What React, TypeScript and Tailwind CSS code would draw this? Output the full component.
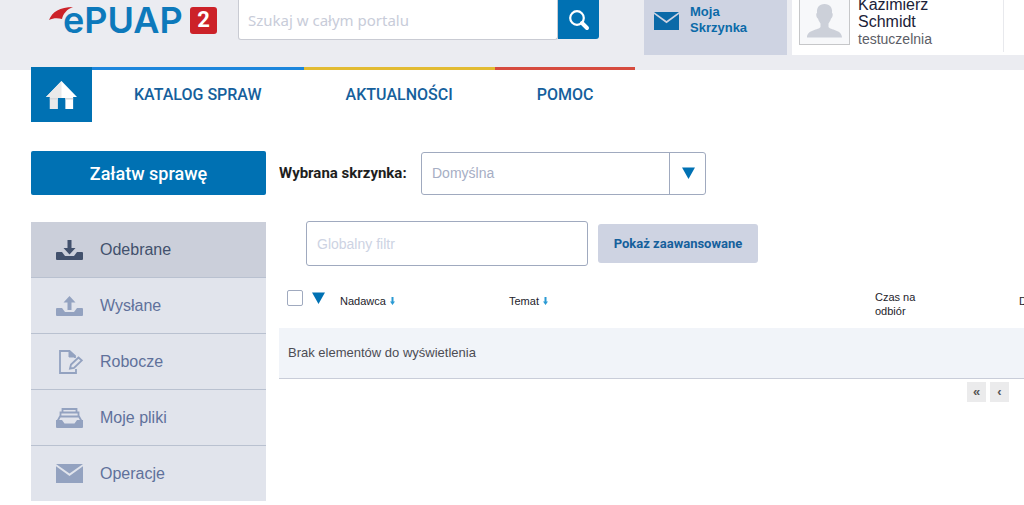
import type { ReactNode } from 'react'

const SANS = "font-['Liberation_Sans',Arial,sans-serif]"
const ROBOTO = "font-['Roboto',sans-serif]"

function Logo() {
  return (
    <a href="#" aria-label="ePUAP 2" className="flex h-10 w-[168px] shrink-0 items-center">
      <svg width="24" height="14" viewBox="0 0 24 14" className="-mr-[10px] mb-3 shrink-0">
        <path d="M0 13C3 5 11 0 24 0 18 2 14 7 13 12 9 11 4 11 0 13Z" fill="#cc2229" />
      </svg>
      <span className="font-['Inter',sans-serif] text-[36px] leading-10 font-semibold text-[#0d79bb]">ePUAP</span>
      <span className="ml-auto flex size-[27px] shrink-0 items-center justify-center rounded-[3px] bg-[#cc2229] font-['Roboto',sans-serif] text-[22px] leading-[26px] font-bold text-white">
        2
      </span>
    </a>
  )
}

function SearchIcon() {
  return (
    <svg width="22" height="22" viewBox="0 0 22 22" fill="none" stroke="#fff">
      <circle cx="9" cy="9" r="6.8" strokeWidth="2.2" />
      <path d="M14 14l5 5" strokeWidth="4" strokeLinecap="round" />
    </svg>
  )
}

function HomeIcon() {
  return (
    <svg width="31" height="28" viewBox="0 0 32 28" preserveAspectRatio="none" className="mr-px">
      <path d="M16 0L32 16H28V28H20V17H12V28H4V16H0Z" fill="#fff" />
      <path d="M16 0V17H12V28H4V16H0Z" fill="#e9e9ea" />
      <path d="M20 17H28V18.500H20ZM4 17H12V18.500H4Z" fill="#d5d8dc" />
    </svg>
  )
}

function Envelope({ width, height }: { width: number; height: number }) {
  return (
    <svg width={width} height={height} viewBox="0 0 27 19" preserveAspectRatio="none" fill="currentColor">
      <path d="M0 0H27L13.500 9.500Z" />
      <path d="M0 2.200L13.500 12 27 2.200V19H0Z" />
    </svg>
  )
}

function Triangle() {
  return (
    <svg width="13" height="12" viewBox="0 0 13 12" fill="#0071b3">
      <path d="M0 0.500H13L6.500 12Z" />
    </svg>
  )
}

const TRAY = 'M1 12H6L9 16H18L21 12H26Q27 12 27 13V19Q27 20 26 20H1Q0 20 0 19V13Q0 12 1 12Z'

function DownloadIcon() {
  return (
    <svg width="27" height="20" viewBox="0 0 27 20" fill="currentColor">
      <path d={TRAY} />
      <path d="M11.500 0H15.500V8H19.500L13.500 14.500 7.500 8H11.500Z" />
    </svg>
  )
}

function UploadIcon() {
  return (
    <svg width="27" height="20" viewBox="0 0 27 20" fill="currentColor">
      <path d={TRAY} />
      <path d="M11.500 14V6.500H7.500L13.500 0 19.500 6.500H15.500V14Z" />
    </svg>
  )
}

function DraftIcon() {
  return (
    <svg width="27" height="26" viewBox="0 0 27 26" fill="none" stroke="currentColor" strokeWidth="1.800">
      <path d="M19 9V7L13.500 2H4V24H20V20" />
      <path d="M13 2V8H19Z" fill="currentColor" strokeWidth="1" />
      <path d="M14 19.500L15 15.500 22.500 8.500 25.800 11.500 18 18.800Z" />
    </svg>
  )
}

function FilesIcon() {
  return (
    <svg width="27" height="20" viewBox="0 0 27 20" fill="none" stroke="currentColor" strokeWidth="1.800">
      <path d="M6.500 4.500V1H20.500V4.500M4.500 8V4.500H22.500V8M1.500 13L4 8.500H23L25.500 13" />
      <path d="M0 12H6L8.500 15.500H18.500L21 12H27V19Q27 20 26 20H1Q0 20 0 19Z" fill="currentColor" stroke="none" />
    </svg>
  )
}

const NAV = [
  { label: 'KATALOG SPRAW', border: 'border-[#1c86dc]' },
  { label: 'AKTUALNOŚCI', border: 'border-[#e2bb32]' },
  { label: 'POMOC', border: 'border-[#d64b3f]' },
]

const FOLDERS: { label: string; icon: ReactNode; active?: boolean }[] = [
  { label: 'Odebrane', icon: <DownloadIcon />, active: true },
  { label: 'Wysłane', icon: <UploadIcon /> },
  { label: 'Robocze', icon: <DraftIcon /> },
  { label: 'Moje pliki', icon: <FilesIcon /> },
  { label: 'Operacje', icon: <Envelope width={27} height={19} /> },
]

function Header() {
  return (
    <header className="flex h-[70px] items-start bg-[#ebecf1] pl-[49px]">
      <Logo />

      <form className="ml-[21px] flex w-[361px] shrink-0" role="search">
        <input
          type="search"
          aria-label="Szukaj"
          placeholder="Szukaj w całym portalu"
          className="h-10 min-w-0 flex-1 rounded-b-[3px] border border-t-0 border-[#c9cbd3] bg-white px-[9px] font-['Noto_Sans',sans-serif] text-[15px] placeholder:text-[#c8ccd9]"
        />
        <button type="button" aria-label="Szukaj" className="flex h-[39px] w-[41px] items-center justify-center rounded-br-[3px] bg-[#0071b3]">
          <SearchIcon />
        </button>
      </form>

      <a href="#" className="ml-[45px] flex h-[55px] w-[143px] shrink-0 items-start bg-[#ced3e2] pl-[10px] text-[#0b6aa8]">
        <span className="pt-3">
          <Envelope width={25} height={18} />
        </span>
        <span className="ml-[11px] pt-1 text-[13px] leading-4 font-bold">
          Moja<br />Skrzynka
        </span>
      </a>

      <div className="ml-[5px] flex h-[55px] min-w-0 flex-1 bg-white pl-[7px]">
        <div className="flex h-[45px] w-[51px] shrink-0 items-end justify-center border border-t-0 border-[#c6c7c9] bg-[#f7f8fa] pb-[6px]">
          <svg width="35" height="34" viewBox="0 0 35 34" fill="#ccd0d9">
            <path d="M17.500 0C23 0 25.500 3.500 25 9 26.500 9.500 25.500 14 24 14.500 23.500 17 22 18.500 21.500 19.500V23C23 26 35 25.500 35 33.500H0C0 25.500 12 26 13.500 23V19.500C13 18.500 11.500 17 11 14.500 9.500 14 8.500 9.500 10 9 9.500 3.500 12 0 17.500 0Z" />
          </svg>
        </div>
        <div className="-mt-1 ml-2 h-14 w-[146px] border-r border-[#e8e9ed] text-[#1c2238]">
          <p className="text-[16px] leading-[17px]">Kazimierz<br />Schmidt</p>
          <p className="text-[14px] leading-[19px] text-[#5c5d66]">testuczelnia</p>
        </div>
      </div>
    </header>
  )
}

function Nav() {
  return (
    <nav className="-mt-[3px] flex h-[55px] pl-[31px]">
      <a href="#" aria-label="Strona główna" className="flex w-[61px] items-center justify-center bg-[#0071b3]">
        <HomeIcon />
      </a>
      {NAV.map(item => (
        <a key={item.label} href="#"
          className={`flex items-center border-t-[3px] px-[42px] pb-[2px] text-[16px] font-medium text-[#15609c] ${ROBOTO} ${item.border}`}>
          {item.label}
        </a>
      ))}
    </nav>
  )
}

function Sidebar() {
  return (
    <aside className="w-[235px] shrink-0">
      <button type="button" className={`h-11 w-full rounded-[2px] bg-[#0071b3] text-[18px] font-medium text-white ${ROBOTO}`}>
        Załatw sprawę
      </button>
      <ul className="mt-[27px]">
        {FOLDERS.map(f => (
          <li key={f.label} className="border-b border-[#b9c1d0] last:border-b-0">
            <a href="#"
              className={`flex h-[55px] items-center pl-[25px] text-[16px] ${f.active ? 'bg-[#cbcfda] text-[#42516c]' : 'bg-[#e1e4ec] text-[#5f719b]'}`}>
              <span className={f.active ? 'w-[44px]' : 'w-[44px] text-[#93a2c0]'}>{f.icon}</span>
              {f.label}
            </a>
          </li>
        ))}
      </ul>
    </aside>
  )
}

function SortLabel({ children }: { children: ReactNode }) {
  return (
    <button type="button" className="flex items-center gap-1">
      {children}
      <svg width="5" height="8" viewBox="0 0 5 8" fill="#2a9ad4">
        <path d="M1.500 0H3.500V4.500H5L2.500 8 0 4.500H1.500Z" />
      </svg>
    </button>
  )
}

function Messages() {
  return (
    <main className="min-w-0 flex-1 overflow-hidden">
      <div className="flex h-11 items-center">
        <label htmlFor="box" className={`w-[142px] shrink-0 text-[15px] font-bold text-[#1e1e20] ${ROBOTO}`}>
          Wybrana skrzynka:
        </label>
        <div className="relative w-[285px]">
          <select id="box" className="h-[43px] w-full appearance-none rounded-[3px] border border-[#a0aabf] bg-white px-[10px] text-[14px] text-[#a6aec4]">
            <option>Domyślna</option>
          </select>
          <span className="pointer-events-none absolute inset-y-0 right-0 flex w-[37px] items-center justify-center border-l border-[#a0aabf]">
            <Triangle />
          </span>
        </div>
      </div>

      <div className="mt-[26px] ml-[27px] flex items-center gap-[10px]">
        <input
          type="text"
          aria-label="Globalny filtr"
          placeholder="Globalny filtr"
          className="h-[45px] w-[282px] rounded-[3px] border border-[#a0aabf] px-[10px] text-[14px] placeholder:text-[#cdd3e3]"
        />
        <button type="button" className={`h-[39px] w-[160px] rounded-[3px] bg-[#ced3e2] text-[13px] font-bold text-[#15609c] ${ROBOTO}`}>
          Pokaż zaawansowane
        </button>
      </div>

      <table className="w-full min-w-[745px] table-fixed text-left">
        <thead>
          <tr className="h-[62px] text-[11px] leading-[14px] text-[#23232b]">
            <th className="w-[61px] pt-[2px] pl-2 font-normal">
              <div className="flex items-center gap-[9px]">
                <input type="checkbox" aria-label="Zaznacz wszystkie" className="size-4 appearance-none rounded-[2px] border border-[#a0aabf] bg-white" />
                <button type="button" aria-label="Opcje zaznaczenia"><Triangle /></button>
              </div>
            </th>
            <th className="w-[169px] pt-2 font-normal"><SortLabel>Nadawca</SortLabel></th>
            <th className="pt-2 font-normal"><SortLabel>Temat</SortLabel></th>
            <th className="w-[144px] pt-[13px] font-normal">Czas na<br />odbiór</th>
            <th className="w-[5px] pt-2 font-normal">D</th>
          </tr>
        </thead>
        <tbody>
          <tr>
            <td colSpan={5} className="h-[50px] border-b border-[#c9cdd9] bg-[#f1f4f9] pl-[9px] text-[13px] text-[#4c4c54]">
              Brak elementów do wyświetlenia
            </td>
          </tr>
        </tbody>
      </table>

      <div className="mt-[3px] flex justify-end gap-1 pr-[15px] text-[13px] leading-5 font-bold text-[#555]">
        <button type="button" aria-label="Pierwsza strona" className="h-5 w-[19px] bg-[#ebebec]">«</button>
        <button type="button" aria-label="Poprzednia strona" className="h-5 w-[19px] bg-[#ebebec]">‹</button>
      </div>
    </main>
  )
}

export default function App() {
  return (
    <div className={`min-h-screen overflow-hidden bg-white ${SANS}`}>
      <Header />
      <Nav />
      <div className="flex gap-[13px] pt-[29px] pl-[31px]">
        <Sidebar />
        <Messages />
      </div>
    </div>
  )
}
